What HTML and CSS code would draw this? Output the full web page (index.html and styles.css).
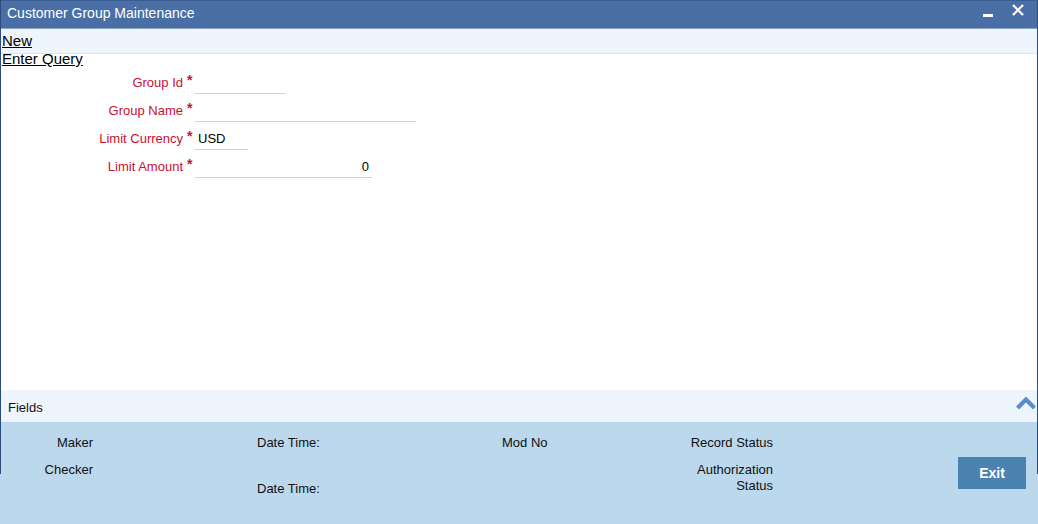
FILE: index.html
```html
<!DOCTYPE html>
<html>
<head>
<meta charset="utf-8">
<title>Customer Group Maintenance</title>
<link rel="stylesheet" href="styles.css">
</head>
<body>
<div class="window">
  <div class="titlebar">
    <span class="title">Customer Group Maintenance</span>
    <div class="controls">
      <span class="minimize"></span>
      <svg class="close" width="12" height="12" viewBox="0 0 12 12"><path d="M1 1L11 11M11 1L1 11" stroke="#fff" stroke-width="2.2"/></svg>
    </div>
  </div>
  <div class="actions">
    <a class="action">New</a>
    <a class="action">Enter Query</a>
  </div>
  <div class="form">
    <div class="row">
      <label class="label">Group Id</label><span class="req">*</span>
      <span class="input w-id"></span>
    </div>
    <div class="row">
      <label class="label">Group Name</label><span class="req">*</span>
      <span class="input w-name"></span>
    </div>
    <div class="row">
      <label class="label">Limit Currency</label><span class="req">*</span>
      <span class="input w-ccy">USD</span>
    </div>
    <div class="row">
      <label class="label">Limit Amount</label><span class="req">*</span>
      <span class="input w-amt num">0</span>
    </div>
  </div>
  <div class="fieldsbar">
    <span>Fields</span>
    <svg class="chevron" width="22" height="14" viewBox="0 0 22 14"><path d="M2.5 12L11 3.5L19.5 12" fill="none" stroke="#5b8dca" stroke-width="4.2" stroke-linejoin="miter"/></svg>
  </div>
</div>
<div class="footer">
  <div class="col c1">
    <div class="ft">Maker</div>
    <div class="ft gap11">Checker</div>
  </div>
  <div class="col c2">
    <div class="ft">Date Time:</div>
    <div class="ft gap30">Date Time:</div>
  </div>
  <div class="col c3">
    <div class="ft">Mod No</div>
  </div>
  <div class="col c4">
    <div class="ft">Record Status</div>
    <div class="ft gap11">Authorization<br>Status</div>
  </div>
  <div class="col c5">
    <button class="exit">Exit</button>
  </div>
</div>
</body>
</html>
```
FILE: styles.css
```css
html, body {
  margin: 0;
  padding: 0;
}
body {
  width: 1038px;
  height: 524px;
  overflow: hidden;
  font-family: "Liberation Sans", Arial, sans-serif;
  background: #ffffff;
  display: flex;
  flex-direction: column;
}
.window {
  height: 422px;
  display: flex;
  flex-direction: column;
  border-left: 1px solid #2c4b78;
  border-right: 1px solid #2c4b78;
  background: #ffffff;
}
.titlebar {
  height: 29px;
  flex: none;
  background: #4a6fa7;
  border-top: 1px solid #3a5d92;
  border-bottom: 1px solid #8aa1bd;
  display: flex;
  align-items: center;
  justify-content: space-between;
  color: #ffffff;
  box-sizing: border-box;
}
.title {
  font-size: 14px;
  padding-left: 6px;
  padding-bottom: 3px;
}
.controls {
  display: flex;
  align-items: center;
  gap: 19px;
  padding-right: 13px;
  margin-top: -9px;
}
.minimize {
  width: 10px;
  height: 3px;
  background: #ffffff;
  margin-top: 10px;
}
.actions {
  display: flex;
  flex-direction: column;
  align-items: flex-start;
  padding: 3px 0 0 1px;
  background: linear-gradient(#eef5fd 0 24px, #dde4ec 24px 25px, transparent 25px);
}
.action {
  font-size: 15px;
  line-height: 18px;
  color: #000000;
  text-decoration: underline;
  cursor: pointer;
}
.form {
  flex: 1;
  padding-top: 1px;
}
.row {
  height: 28px;
  display: flex;
  align-items: center;
}
.label {
  width: 182px;
  text-align: right;
  font-size: 13px;
  line-height: 16px;
  color: #c8102e;
}
.req {
  width: 12px;
  padding-left: 4px;
  box-sizing: border-box;
  font-size: 14px;
  font-weight: bold;
  color: #d0103a;
  align-self: flex-start;
  margin-top: 4px;
  line-height: 14px;
}
.input {
  height: 22px;
  box-sizing: border-box;
  border-bottom: 1px solid #d2d2d2;
  font-size: 13px;
  line-height: 21px;
  color: #000000;
  padding: 0 3px;
}
.w-id { width: 90px; }
.w-name { width: 221px; }
.w-ccy { width: 53px; }
.w-amt { width: 177px; }
.num { text-align: right; }
.fieldsbar {
  height: 32px;
  flex: none;
  box-sizing: border-box;
  padding-top: 2px;
  background: #eef5fd;
  display: flex;
  align-items: center;
  justify-content: space-between;
  padding-left: 7px;
  font-size: 13px;
  color: #111111;
}
.chevron {
  margin-top: -9px;
}
.footer {
  height: 102px;
  box-sizing: border-box;
  padding-top: 13px;
  display: flex;
  align-items: flex-start;
  background:
    linear-gradient(#2c4b78, #2c4b78) left top / 1px 52px no-repeat,
    linear-gradient(#2c4b78, #2c4b78) right top / 1px 52px no-repeat,
    #bcd8ec;
}
.col {
  display: flex;
  flex-direction: column;
}
.ft {
  font-size: 13px;
  line-height: 16px;
  color: #111111;
}
.c1 { width: 93px; text-align: right; }
.c2 { margin-left: 164px; width: 245px; }
.c3 { width: 150px; }
.c4 { width: 121px; text-align: right; }
.c5 { margin-left: 185px; padding-top: 22px; }
.gap11 { margin-top: 11px; }
.gap30 { margin-top: 30px; }
.exit {
  width: 68px;
  height: 32px;
  border: none;
  background: #4a82b0;
  color: #ffffff;
  font-family: "Liberation Sans", Arial, sans-serif;
  font-size: 14px;
  font-weight: bold;
  padding: 0;
  cursor: pointer;
}
```
